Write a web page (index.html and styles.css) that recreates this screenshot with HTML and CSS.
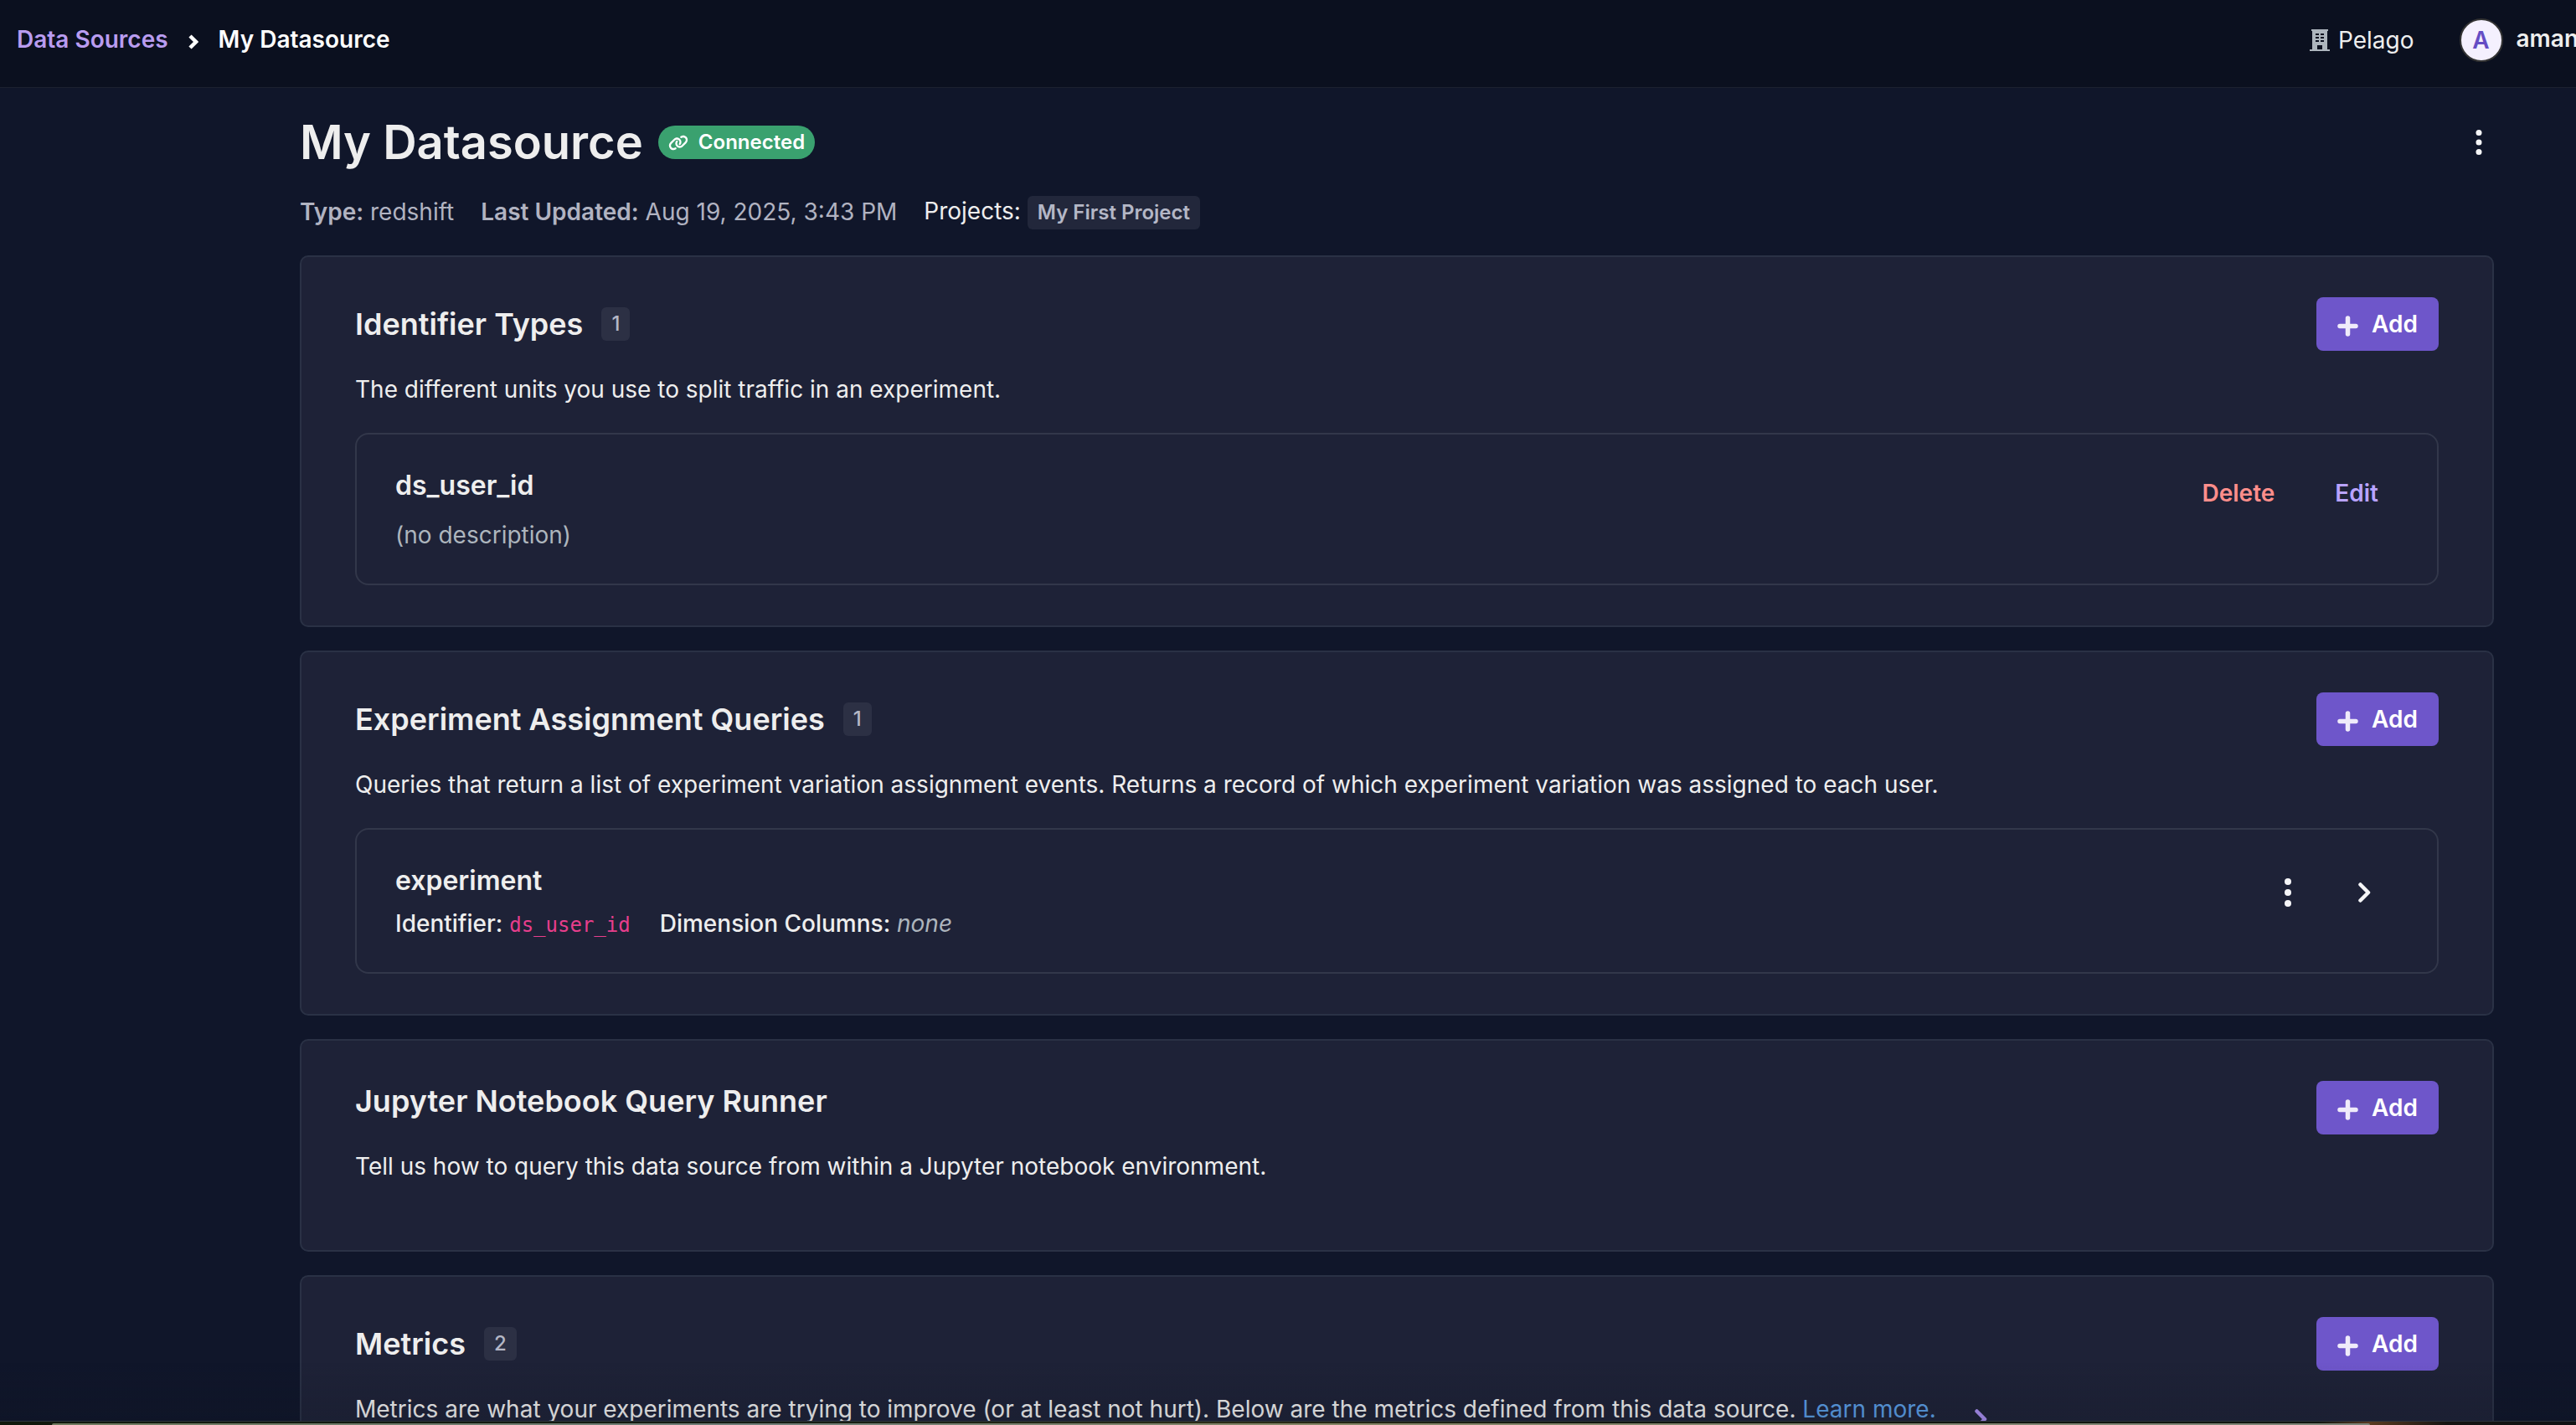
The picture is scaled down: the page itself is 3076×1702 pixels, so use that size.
FILE: index.html
```html
<!DOCTYPE html>
<html lang="en">
<head>
<meta charset="utf-8">
<title>My Datasource</title>
<link rel="stylesheet" href="styles.css">
</head>
<body>
<svg class="sprite" aria-hidden="true">
  <symbol id="plus" viewBox="0 0 25 25"><path d="M12.500 3v19M3 12.500h19" fill="none" stroke="currentColor" stroke-width="5.500" stroke-linecap="round"/></symbol>
  <symbol id="dots" viewBox="0 0 8 34"><circle cx="4" cy="4" r="4"/><circle cx="4" cy="17" r="4"/><circle cx="4" cy="30" r="4"/></symbol>
  <symbol id="chevron" viewBox="0 0 15 24"><path d="M2.500 2.500l9.500 9.500-9.500 9.500" fill="none" stroke="currentColor" stroke-width="4.500" stroke-linecap="round" stroke-linejoin="round"/></symbol>
</svg>
<header class="topbar">
  <nav class="crumbs" aria-label="Breadcrumb">
    <a class="crumb-link" href="#">Data Sources</a>
    <svg class="crumb-sep" viewBox="0 0 12 18"><path d="M2 2l7 7-7 7" fill="none" stroke="currentColor" stroke-width="4.500"/></svg>
    <span>My Datasource</span>
  </nav>
  <div class="account">
    <div class="org">
      <svg class="org-icon" viewBox="0 0 24 26"><path fill="currentColor" fill-rule="evenodd" d="M2 0h20v2h-1v22h3v2H0v-2h3V2H2zM7 5v2h4V5zm6 0v2h4V5zM7 9v2h4V9zm6 0v2h4V9zM7 13v2h4v-2zm6 0v2h4v-2zM9 19v5h6v-5z"/></svg>
      <span>Pelago</span>
    </div>
    <button class="user" type="button"><span class="avatar">A</span><span class="user-name">aman</span></button>
  </div>
</header>
<main class="page">
  <div class="title-row">
    <h1 class="title">My Datasource</h1>
    <span class="status">
      <svg class="link-icon" viewBox="0 0 640 512"><path fill="currentColor" d="M579.800 267.700c56.500-56.500 56.500-148 0-204.500c-50-50-128.800-56.500-186.300-15.400l-1.600 1.100c-14.400 10.300-17.700 30.300-7.400 44.600s30.300 17.700 44.600 7.400l1.600-1.100c32.100-22.900 76-19.300 103.800 8.600c31.500 31.500 31.500 82.500 0 114L422.300 334.800c-31.500 31.500-82.500 31.500-114 0c-27.900-27.900-31.500-71.800-8.600-103.800l1.100-1.600c10.300-14.400 6.900-34.400-7.400-44.600s-34.400-6.900-44.600 7.400l-1.100 1.600C206.500 251.200 213 330 263 380c56.500 56.500 148 56.500 204.500 0L579.800 267.700zM60.200 244.300c-56.500 56.500-56.500 148 0 204.500c50 50 128.800 56.500 186.300 15.400l1.600-1.100c14.400-10.300 17.700-30.300 7.400-44.600s-30.300-17.700-44.600-7.400l-1.600 1.100c-32.100 22.900-76 19.300-103.800-8.600C74 372 74 321 105.500 289.500L217.700 177.200c31.500-31.500 82.500-31.500 114 0c27.900 27.900 31.500 71.800 8.600 103.900l-1.100 1.600c-10.300 14.400-6.900 34.400 7.400 44.600s34.400 6.900 44.600-7.400l1.100-1.600C433.500 260.800 427 182 377 132c-56.500-56.500-148-56.500-204.500 0L60.200 244.300z"/></svg>
      Connected
    </span>
    <button class="icon-button title-menu" type="button" aria-label="More options"><svg class="dots-small"><use href="#dots"/></svg></button>
  </div>
  <div class="meta">
    <span class="meta-muted"><strong>Type:</strong> redshift</span>
    <span class="meta-muted"><strong>Last Updated:</strong> Aug 19, 2025, 3:43 PM</span>
    <span>Projects: <span class="project">My First Project</span></span>
  </div>

  <section class="card">
    <div class="card-head">
      <h2 class="card-title">Identifier Types <span class="count">1</span></h2>
      <button class="add" type="button"><svg class="plus"><use href="#plus"/></svg>Add</button>
    </div>
    <p class="desc">The different units you use to split traffic in an experiment.</p>
    <div class="item">
      <div>
        <h3 class="item-title">ds_user_id</h3>
        <p class="item-desc">(no description)</p>
      </div>
      <div class="item-actions">
        <button class="danger" type="button">Delete</button>
        <button class="accent" type="button">Edit</button>
      </div>
    </div>
  </section>

  <section class="card">
    <div class="card-head">
      <h2 class="card-title">Experiment Assignment Queries <span class="count">1</span></h2>
      <button class="add" type="button"><svg class="plus"><use href="#plus"/></svg>Add</button>
    </div>
    <p class="desc">Queries that return a list of experiment variation assignment events. Returns a record of which experiment variation was assigned to each user.</p>
    <div class="item">
      <div>
        <h3 class="item-title">experiment</h3>
        <p class="item-meta"><span><b>Identifier:</b> <code>ds_user_id</code></span><span><b>Dimension Columns:</b> <em>none</em></span></p>
      </div>
      <div class="item-actions item-icons">
        <button class="icon-button" type="button" aria-label="Query options"><svg class="dots"><use href="#dots"/></svg></button>
        <button class="icon-button" type="button" aria-label="Expand"><svg class="chevron"><use href="#chevron"/></svg></button>
      </div>
    </div>
  </section>

  <section class="card card-empty">
    <div class="card-head">
      <h2 class="card-title">Jupyter Notebook Query Runner</h2>
      <button class="add" type="button"><svg class="plus"><use href="#plus"/></svg>Add</button>
    </div>
    <p class="desc">Tell us how to query this data source from within a Jupyter notebook environment.</p>
  </section>

  <section class="card">
    <div class="card-head">
      <h2 class="card-title">Metrics <span class="count">2</span></h2>
      <button class="add" type="button"><svg class="plus"><use href="#plus"/></svg>Add</button>
    </div>
    <div class="metrics-line">
      <p class="desc">Metrics are what your experiments are trying to improve (or at least not hurt). Below are the metrics defined from this data source. <a class="learn" href="#">Learn more.</a></p>
      <button class="icon-button metrics-toggle" type="button" aria-label="Expand metrics"><svg class="chevron"><use href="#chevron"/></svg></button>
    </div>
  </section>
</main>
<div class="shade"></div>
<div class="dock"><div class="dock-edge"></div></div>
</body>
</html>
```
FILE: styles.css
```css
* { box-sizing: border-box; }
html, body { height: 100%; }
body {
  margin: 0;
  overflow: hidden;
  background: #10162a;
  color: #eeeeee;
  font: 28px/40px Inter, "Liberation Sans", sans-serif;
}
h1, h2, h3, p { margin: 0; }
button { margin: 0; padding: 0; border: 0; background: none; color: inherit; font: inherit; cursor: pointer; }
a { text-decoration: none; }
svg { display: block; flex: none; }
.sprite { position: absolute; width: 0; height: 0; }

.topbar {
  display: flex;
  justify-content: space-between;
  height: 105px;
  padding-left: 20px;
  background: #0b101f;
  border-bottom: 1px solid #1c2130;
  overflow: hidden;
}
.crumbs { display: flex; align-items: center; height: 94px; color: #fff; font-weight: 600; }
.crumb-link { color: #b99cf0; }
.crumb-sep { width: 12px; height: 18px; margin: 5px 24px 0 24px; }
.account { display: flex; align-items: center; height: 96px; width: 318px; flex: none; white-space: nowrap; }
.org { display: flex; align-items: center; gap: 10px; }
.org-icon { width: 24px; height: 26px; color: #adb5bd; }
.user { display: flex; align-items: center; gap: 16px; margin-left: 54px; font-weight: 600; }
.avatar { width: 52px; height: 52px; border: 2px solid #333; border-radius: 50%; background: #f4f0fe; color: #654dc4; line-height: 48px; flex: none; text-align: center; }
.user-name { padding-bottom: 4px; }

.page { margin: 0 98px 0 358px; }
.title-row { display: flex; align-items: center; height: 130px; }
.title { font-size: 56px; line-height: 64px; font-weight: 600; }
.status {
  display: flex; align-items: center; gap: 12px;
  height: 40px; margin-left: 18px; padding: 0 12px;
  border-radius: 20px; background: #3aa16f; color: #fff;
  font-size: 24px; font-weight: 600;
}
.link-icon { width: 24px; height: 19px; }
.icon-button { display: flex; color: #f5f5f7; fill: currentColor; }
.title-menu { margin: 0 14px 0 auto; }
.dots-small { width: 8px; height: 30px; }
.dots { width: 8px; height: 34px; }
.chevron { width: 15px; height: 24px; }
.meta { display: flex; gap: 32px; height: 70px; padding-bottom: 34px; align-items: center; white-space: nowrap; }
.meta-muted { color: #b1b3c1; }
.meta strong { font-weight: 600; }
.project { display: inline-block; padding: 0 12px; border-radius: 6px; background: #22273b; color: #b4b7c6; font-size: 24px; font-weight: 600; }

.card { margin-bottom: 28px; padding: 48px 64px; border: 2px solid #2a3145; border-radius: 10px; background: #1e2237; }
.card-head { display: flex; justify-content: space-between; align-items: center; height: 64px; }
.card-title { display: flex; align-items: center; gap: 22px; font-size: 36px; line-height: 48px; font-weight: 600; }
.card-empty { padding-bottom: 80px; }
.card-empty .card-head { height: 56px; align-items: flex-start; }
.count { padding: 0 12px; border-radius: 6px; background: #2c3044; color: #b4b7c6; font-size: 24px; line-height: 40px; font-weight: 500; }
.add { display: flex; align-items: center; gap: 16px; height: 64px; padding: 0 25px; border-radius: 8px; background: #6e56ca; color: #fff; font-weight: 600; }
.plus { width: 25px; height: 25px; margin-top: 4px; color: #efebfa; }
.desc { margin-top: 26px; }
.item { display: flex; justify-content: space-between; margin-top: 32px; padding: 40px 70px 38px 46px; border: 2px solid #32374a; border-radius: 16px; }
.item-title { font-size: 32px; line-height: 42px; font-weight: 600; }
.item-desc { margin-top: 18px; color: #adb5bd; }
.item-actions { display: flex; gap: 72px; height: 60px; align-items: center; font-weight: 600; }
.item-icons { gap: 80px; height: 70px; padding-right: 9px; }
.danger { color: #ff8e8b; }
.accent { color: #b9a3ff; }
.item-meta { display: flex; gap: 35px; margin-top: 10px; }
.item-meta b { font-weight: 500; }
.item-meta code { color: #e83e8c; font: 24px "DejaVu Sans Mono", monospace; }
.item-meta em { color: #adb5bd; }
.metrics-line { display: flex; gap: 46px; align-items: flex-start; white-space: nowrap; }
.learn { color: #5b9ee5; }
.metrics-toggle { margin-top: 46px; color: #a98ef0; }

.shade { position: fixed; left: 0; right: 0; bottom: 5px; height: 70px; background: linear-gradient(to bottom, rgba(12, 18, 28, 0), rgba(12, 18, 28, 0.15)); pointer-events: none; }
.dock {
  position: fixed; left: 0; right: 0; bottom: 0; height: 5px; padding-top: 2px;
  border-top: 1px solid #2e343d;
  background: linear-gradient(to right, #10180c, #141c12 30%, #2b2c16 48%, #10160f 62%, #10160f 90%, #5a3a20 92%, #151412 95%, #101214);
}
.dock-edge { width: 90%; height: 2px; margin-left: 2%; border-radius: 2px 2px 0 0; background: linear-gradient(to right, #6f7a5e, #6f7d78 30%, #858565 55%, #7d8478); }
```
